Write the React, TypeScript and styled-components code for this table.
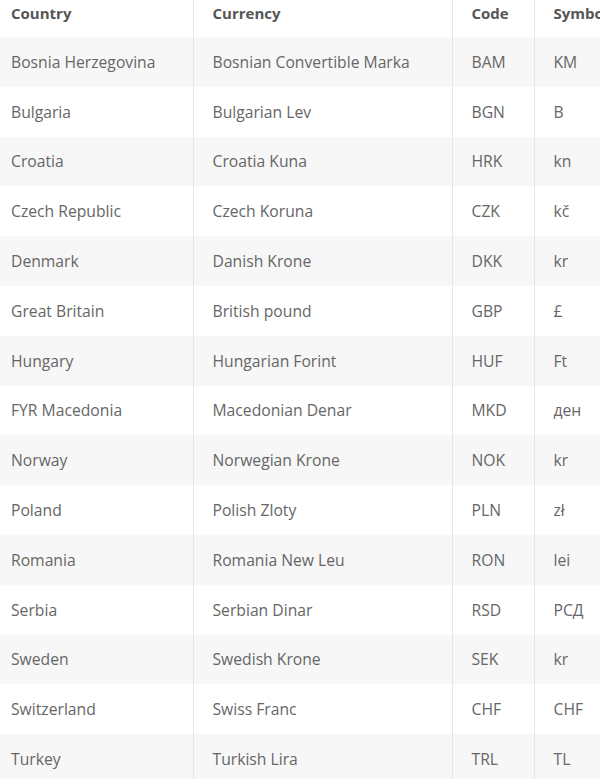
import styled, { createGlobalStyle } from "styled-components";

const rows = [
  ["Bosnia Herzegovina", "Bosnian Convertible Marka", "BAM", "KM"],
  ["Bulgaria", "Bulgarian Lev", "BGN", "B"],
  ["Croatia", "Croatia Kuna", "HRK", "kn"],
  ["Czech Republic", "Czech Koruna", "CZK", "kč"],
  ["Denmark", "Danish Krone", "DKK", "kr"],
  ["Great Britain", "British pound", "GBP", "£"],
  ["Hungary", "Hungarian Forint", "HUF", "Ft"],
  ["FYR Macedonia", "Macedonian Denar", "MKD", "ден"],
  ["Norway", "Norwegian Krone", "NOK", "kr"],
  ["Poland", "Polish Zloty", "PLN", "zł"],
  ["Romania", "Romania New Leu", "RON", "lei"],
  ["Serbia", "Serbian Dinar", "RSD", "РСД"],
  ["Sweden", "Swedish Krone", "SEK", "kr"],
  ["Switzerland", "Swiss Franc", "CHF", "CHF"],
  ["Turkey", "Turkish Lira", "TRL", "TL"],
];

const widths = [193, 259, 82, 120];
const headers = ["Country", "Currency", "Code", "Symbol"];

function App() {
  return (
    <Page>
      <GlobalStyle />
      <Table>
        <colgroup>
          {widths.map((w, i) => (
            <col key={i} style={{ width: w }} />
          ))}
        </colgroup>
        <thead>
          <tr>
            {headers.map((h, i) => (
              <Th key={h} $first={i === 0}>
                {h}
              </Th>
            ))}
          </tr>
        </thead>
        <tbody>
          {rows.map((r, idx) => (
            <Row key={r[0]} $shaded={idx % 2 === 0}>
              {r.map((c, i) => (
                <Td key={i} $first={i === 0}>
                  {c}
                </Td>
              ))}
            </Row>
          ))}
        </tbody>
      </Table>
    </Page>
  );
}

const GlobalStyle = createGlobalStyle`
  body {
    margin: 0;
    background: #fff;
    font-family: "Open Sans", "Liberation Sans", sans-serif;
    overflow: hidden;
  }
`;

const Page = styled.div`
  width: 600px;
  height: 779px;
  overflow: hidden;
`;

const Table = styled.table`
  margin-top: -12px;
  width: 654px;
  table-layout: fixed;
  border-collapse: collapse;
  font-size: 15.7px;
  color: #666;
`;

const Th = styled.th<{ $first?: boolean }>`
  height: 49px;
  padding: 0 0 0 ${(p) => (p.$first ? "11px" : "19px")};
  text-align: left;
  font-size: 15px;
  font-weight: 700;
  color: #555;
  white-space: nowrap;
  overflow: hidden;
  border-left: ${(p) => (p.$first ? "none" : "1px solid #e6e6e6")};
`;

const Row = styled.tr<{ $shaded: boolean }>`
  background: ${(p) => (p.$shaded ? "#f7f7f7" : "#fff")};
`;

const Td = styled.td<{ $first?: boolean }>`
  height: 49.8px;
  padding: 0 0 0 ${(p) => (p.$first ? "11px" : "19px")};
  white-space: nowrap;
  border-left: ${(p) => (p.$first ? "none" : "1px solid #e6e6e6")};
`;

export default App;
